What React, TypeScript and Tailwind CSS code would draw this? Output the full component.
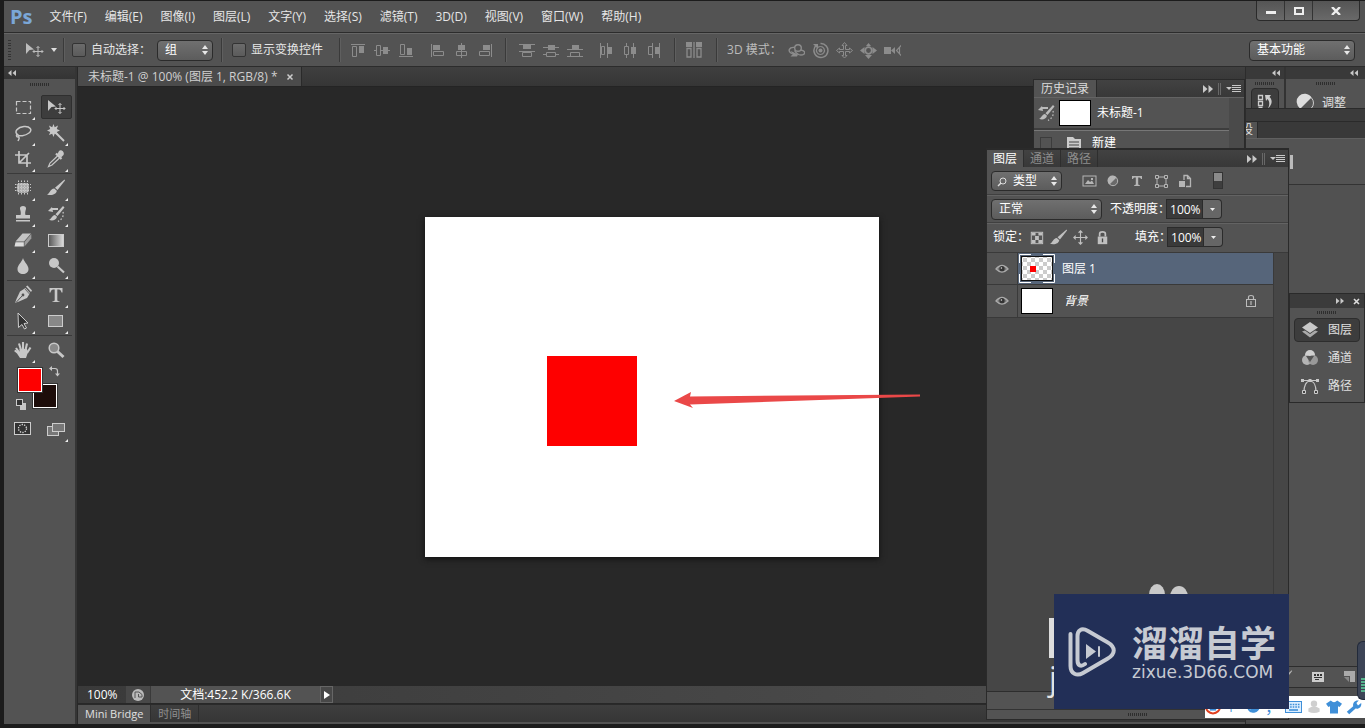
import type { ReactNode } from 'react';

const MENUS = [
  '文件(F)', '编辑(E)', '图像(I)', '图层(L)', '文字(Y)', '选择(S)',
  '滤镜(T)', '3D(D)', '视图(V)', '窗口(W)', '帮助(H)',
];

function Icon({ children, size = 'size-5', box = '0 0 20 20' }: { children: ReactNode; size?: string; box?: string }) {
  return (
    <svg className={`${size} shrink-0`} viewBox={box} fill="currentColor">
      {children}
    </svg>
  );
}

// stroked outline, no fill
function Line({ d, w = 1, dash }: { d: string; w?: number; dash?: string }) {
  return <path d={d} fill="none" stroke="currentColor" strokeWidth={w} strokeDasharray={dash} />;
}

const brush = (
  <>
    <path d="M18.5 1.5 L19 2.5 L11.5 12 L9 9.8 Z" />
    <path d="M8.3 10.5 L10.8 12.8 C10.5 16 6 18 1 16.5 C4 15.5 4 11 8.3 10.5Z" />
  </>
);

const historyBrush = (
  <>
    <path d="M17 2 L18.5 3.5 L11.5 12 L9.5 10.3Z" />
    <path d="M9 11 L11 12.8 C10 16.5 6 17 3 15.8 C5.5 15 6 11.5 9 11Z" />
    <path d="M2 7 L6 3 L7 8Z" />
    <Line d="M5 5 H12" w={2} />
    <Line d="M17 8 C18 12 16 15.5 12 17.5" w={1.3} dash="1.5 2" />
  </>
);

const lock = (
  <>
    <rect x="5" y="9" width="10" height="8" />
    <Line d="M7 9 V6 Q7 4 10 4 Q13 4 13 6 V9" w={1.8} />
    <path d="M9.3 11 H10.7 V15 H9.3Z" fill="#444" />
  </>
);

const moveCross = <Line d="M10 3 V17 M3 10 H17 M8 5 L10 3 L12 5 M8 15 L10 17 L12 15 M5 8 L3 10 L5 12 M15 8 L17 10 L15 12" w={1.2} />;

const TOOLS: { name: string; icon: ReactNode; plain?: boolean }[][] = [
  [
    { name: '选框', icon: <Line d="M3.5 4.5 H17.5 V16.5 H3.5Z" w={1.2} dash="4 2" /> },
    {
      name: '移动',
      icon: (
        <>
          <path d="M2 3 L10 9.5 L5.5 10 L2 14Z" />
          <Line d="M14 6.5 V16.5 M9 11.5 H19 M12.5 8 L14 6.5 L15.5 8 M12.5 15 L14 16.5 L15.5 15 M10.5 10 L9 11.5 L10.5 13 M17.5 10 L19 11.5 L17.5 13" />
        </>
      ),
      plain: true,
    },
    {
      name: '套索',
      icon: (
        <>
          <Line d="M5 12 C0 9 5 4 11 3.5 C17 3 20 7 16 10 C12 13 6 13.5 5 12 C3 11 3 14 5 14 C7 14 6 16 5 18" w={1.5} />
        </>
      ),
    },
    {
      name: '魔棒',
      icon: (
        <>
          <path d="M7.5 1 L8.7 4.2 L12 2.5 L10.8 6 L14 7.5 L10.8 9 L12 12 L8.7 10.7 L7.5 14 L6.2 10.7 L3 12 L4.2 9 L1 7.5 L4.2 6 L3 2.5 L6.2 4.2Z" />
          <Line d="M10 10 L18 18" w={2} />
        </>
      ),
    },
    { name: '裁剪', icon: <Line d="M6 2 V14 H18 M2 6 H14 V18 M6 14 L16 4" w={1.7} /> },
    {
      name: '吸管',
      icon: (
        <>
          <path d="M13 2 C15 0 19 3 17.5 6 L15 8.5 L11.5 5Z" />
          <Line d="M10 4.5 L15.5 10" w={2.2} />
          <Line d="M11.5 7 L4 14 L2.5 17.5 L6 16 L13.5 9" w={1.2} />
        </>
      ),
    },
  ],
  [
    {
      name: '修补',
      icon: (
        <>
          <rect x="4" y="5" width="12" height="10" rx="3" fill="#a9a9a9" />
          <Line d="M5.5 2.5 V17.5 M8.5 2.5 V17.5 M11.5 2.5 V17.5 M14.5 2.5 V17.5 M2 6.5 H18 M2 9.5 H18 M2 12.5 H18" dash="1.5 1" />
        </>
      ),
    },
    { name: '画笔', icon: brush },
    {
      name: '图章',
      icon: (
        <>
          <path d="M7 5 C6 1 14 1 13 5 C12 8 12 10 12.5 11 H17 V14.5 H3 V11 H7.5 C8 10 8 8 7 5Z" />
          <rect x="3" y="16" width="14" height="1.5" />
        </>
      ),
    },
    { name: '历史画笔', icon: historyBrush },
    {
      name: '橡皮',
      icon: (
        <>
          <path d="M9.5 3.5 H18 L11 11.5 H2.5Z" fill="#c4c4c4" />
          <path d="M18.3 4 V8.5 L11.5 16.5 V12Z" fill="#9c9c9c" />
          <path d="M2.5 12.3 H10.8 V16.5 H1.5Z" fill="#dcdcdc" />
        </>
      ),
    },
    {
      name: '渐变',
      icon: (
        <>
          <linearGradient id="ramp">
            <stop offset="0" stopColor="#555" />
            <stop offset="1" stopColor="#ddd" />
          </linearGradient>
          <rect x="2.5" y="4.5" width="15" height="12" fill="url(#ramp)" stroke="#ccc" />
        </>
      ),
    },
    { name: '模糊', icon: <path d="M10 2 C11 6 15.5 9 15.5 13 C15.5 16.5 13 18 10 18 C7 18 4.5 16.5 4.5 13 C4.5 9 9 6 10 2Z" /> },
    {
      name: '减淡',
      icon: (
        <>
          <circle cx="8" cy="7" r="5" />
          <Line d="M11.5 10.5 L18 16.5" w={2.2} />
        </>
      ),
    },
  ],
  [
    {
      name: '钢笔',
      icon: (
        <>
          <path d="M12.5 3 L17 8 L14 13 L6 16.5 L2 18 L3.5 14 L7 6.5Z" />
          <path d="M13 1.5 L14.5 0.5 L19 5.5 L18 7Z" />
          <path d="M12 4 L16.5 9" stroke="#535353" strokeWidth="0.8" />
          <path d="M3 17.5 L9.5 10.5" stroke="#535353" />
          <circle cx="10" cy="10" r="1.4" fill="#535353" />
        </>
      ),
    },
    {
      name: '文字',
      icon: <path d="M3.5 3 H16.5 V7.5 H15.5 C15 5 14 4.5 11.3 4.5 V15 C11.3 16 12 16.2 13.5 16.3 V17 H6.5 V16.3 C8 16.2 8.7 16 8.7 15 V4.5 C6 4.5 5 5 4.5 7.5 H3.5Z" />,
    },
    { name: '路径选择', icon: <path d="M5 2 L15 12 L11 12.5 L13.5 17 L11.5 18 L9 13.5 L5.5 16.5Z" fill="#333" stroke="#ccc" /> },
    { name: '矩形', icon: <rect x="2.5" y="4.5" width="14" height="11" fill="#888" stroke="#ccc" /> },
  ],
  [
    {
      name: '抓手',
      icon: (
        <>
          <Line d="M3 8 L6.5 13 M6 3.5 L8 10 M10 2 V10 M14 3.5 L12.5 10 M17.5 7.5 L14 13" w={2.1} />
          <path d="M6.5 9 H14 L15 12 L13 18 H7 L4 13.5 L1 11 L2.5 9.8 L6.5 12Z" />
        </>
      ),
    },
    {
      name: '缩放',
      icon: (
        <>
          <circle cx="8" cy="8" r="4.8" fill="#8a8a8a" stroke="currentColor" strokeWidth="1.5" />
          <Line d="M11.5 11.5 L17.5 17" w={3} />
        </>
      ),
      plain: true,
    },
  ],
];

// outline shape and solid shape, drawn next to one guide line each
const ALIGN_GROUPS = [
  [
    ['顶对齐', 'M1 2.5 H15 M2.5 4.5 H6.5 V14.5 H2.5Z', 'M9 4 H14 V11 H9Z'],
    ['垂直居中', 'M0 8.5 H2 M7 8.5 H16 M2.5 3.5 H6.5 V13.5 H2.5Z', 'M9 5 H14 V12 H9Z'],
    ['底对齐', 'M1 14.5 H15 M2.5 2.5 H6.5 V12.5 H2.5Z', 'M9 6 H14 V13 H9Z'],
  ],
  [
    ['左对齐', 'M2.5 2 V15 M4.5 9.5 H14.5 V13.5 H4.5Z', 'M4 3 H11 V8 H4Z'],
    ['水平居中', 'M8.5 1 V3 M8.5 8 V16 M3.5 9.5 H13.5 V13.5 H3.5Z', 'M5 3 H12 V8 H5Z'],
    ['右对齐', 'M14.5 2 V15 M2.5 9.5 H12.5 V13.5 H2.5Z', 'M6 3 H13 V8 H6Z'],
  ],
];

const SPREAD_GROUPS = [
  [
    ['按顶分布', 'M0 2.5 H16 M0 9.5 H16 M3.5 10.5 H12.5 V14.5 H3.5Z', 'M4 3 H12 V7 H4Z'],
    ['垂直分布', 'M0 5.5 H16 M0 12.5 H3 M13 12.5 H16 M3.5 10.5 H12.5 V14.5 H3.5Z', 'M5 3 H12 V8 H5Z'],
    ['按底分布', 'M0 7.5 H16 M0 14.5 H16 M3.5 10.5 H12.5 V14.5 H3.5Z', 'M5 3 H12 V7 H5Z'],
  ],
  [
    ['按左分布', 'M2.5 1 V16 M9.5 1 V16 M3.5 4.5 H6.5 V12.5 H3.5Z', 'M10 5 H14 V12 H10Z'],
    ['水平分布', 'M4.5 1 V4 M4.5 13 V16 M11.5 1 V16 M2.5 4.5 H6.5 V12.5 H2.5Z', 'M9 5 H14 V12 H9Z'],
    ['按右分布', 'M6.5 1 V16 M13.5 1 V16 M2.5 4.5 H6.5 V12.5 H2.5Z', 'M9 5 H13 V12 H9Z'],
  ],
];

const MODES_3D = [
  <g key="a">
    <circle cx="10" cy="6" r="3.3" fill="none" stroke="currentColor" strokeWidth="1.4" />
    <Line d="M7 5.5 C1 4.5 -1 9.5 4 11.5 M12.5 8 C18 8.5 18 13 13 13 C10 13 8 11 6.5 8.5" w={1.4} />
    <path d="M3 9 L10 12.5 L9 14.5 L2.5 14.5 L4.5 12.5Z" />
  </g>,
  <g key="b">
    <Line d="M4 3.5 A7 7 0 1 0 8.5 1.5" w={1.5} />
    <Line d="M8.5 4.5 A4 4 0 1 1 8.4 4.5" w={1.2} />
    <circle cx="8.5" cy="8.5" r="2" />
    <path d="M1 2 H6 V7Z" />
  </g>,
  <Line key="c" d="M8.5 0.5 L11 3.5 H9.5 V7.5 H13.5 V6 L16.5 8.5 L13.5 11 V9.5 H9.5 V13.5 H11 L8.5 16 L6 13.5 H7.5 V9.5 H3.5 V11 L0.5 8.5 L3.5 6 V7.5 H7.5 V3.5 H6Z" />,
  <g key="d">
    <circle cx="8.5" cy="8.5" r="3.3" fill="none" stroke="currentColor" strokeWidth="1.8" />
    <path d="M8.5 1 L11 4 H6Z M8.5 17 L12 13 H5Z M0 8.5 L4.5 5 V12Z M17 8.5 L12.5 5 V12Z" />
  </g>,
  <g key="e">
    <path d="M0 5 H7 V12 H0Z M7 8.5 L11 5 V12Z" />
    <Line d="M17.5 3 L12.5 8.5 L17.5 14 M15.5 5 V12" w={1.2} />
  </g>,
];

function Spin() {
  return (
    <svg className="pointer-events-none absolute right-1 top-1/2 h-3 w-2 -translate-y-1/2" viewBox="0 0 8 12" fill="#e8e8e8">
      <path d="M4 1 L7 5 H1Z M4 11 L1 7 H7Z" />
    </svg>
  );
}

function Dropdown({ label, value, className, indent = 'pl-[7px]' }: { label: string; value: string; className: string; indent?: string }) {
  return (
    <div className={`relative ${className}`}>
      <select
        aria-label={label}
        className={`h-full w-full appearance-none rounded-sm border border-[#2b2b2b] bg-gradient-to-b from-[#707070] to-[#5c5c5c] text-white ${indent}`}
      >
        <option>{value}</option>
      </select>
      <Spin />
    </div>
  );
}

function Check({ id, label }: { id: string; label: string }) {
  return (
    <label htmlFor={id} className="flex items-center gap-[5px]">
      <input
        id={id}
        type="checkbox"
        className="size-3.5 appearance-none rounded-xs border border-[#333] bg-gradient-to-b from-[#6b6b6b] to-[#5b5b5b]"
      />
      {label}
    </label>
  );
}

function Divider() {
  return <div className="h-6 w-0.5 border-l border-[#3a3a3a] bg-[#5f5f5f]" />;
}

function Grip() {
  return (
    <svg className="h-1 w-5" viewBox="0 0 20 4">
      <path d="M0.5 0 V3 M2.5 0 V3 M4.5 0 V3 M6.5 0 V3 M8.5 0 V3 M10.5 0 V3 M12.5 0 V3 M14.5 0 V3 M16.5 0 V3 M18.5 0 V3" stroke="#2e2e2e" />
    </svg>
  );
}

function Arrows({ left }: { left?: boolean }) {
  return (
    <svg className="h-1.5 w-2" viewBox="0 0 8 6" fill="#c8c8c8">
      <path d={left ? 'M3.5 0 V6 L0 3Z M8 0 V6 L4.5 3Z' : 'M0 0 L3.5 3 L0 6Z M4.5 0 L8 3 L4.5 6Z'} />
    </svg>
  );
}

function PanelControls() {
  return (
    <div className="ml-auto flex items-center gap-[5px]">
      <button aria-label="折叠">
        <svg className="h-2 w-2.5" viewBox="0 0 10 8" fill="#c8c8c8">
          <path d="M0 0 L4.5 4 L0 8Z M5.5 0 L10 4 L5.5 8Z" />
        </svg>
      </button>
      <span className="h-3 w-[3px] border-x border-[#686868]" />
      <button aria-label="面板菜单">
        <svg className="h-2.5 w-4" viewBox="0 0 16 10" fill="#c8c8c8">
          <path d="M0 3 H6 L3 6Z" />
          <path d="M6 1 H15 V2 H6Z M6 3 H15 V4 H6Z M6 5 H15 V6 H6Z M6 7 H15 V8 H6Z" />
        </svg>
      </button>
    </div>
  );
}

function TitleBar() {
  return (
    <header className="flex h-8 items-center border-b border-[#2c2c2c] pl-1.5 text-[#e6e6e6]">
      <span className="mr-[17px] font-['Open_Sans'] text-xl leading-6 font-bold text-[#7ba7d7]">Ps</span>
      <nav className="flex gap-[18px]">
        {MENUS.map((m) => (
          <button key={m}>{m}</button>
        ))}
      </nav>
      <div className="ml-auto mr-[5px] flex h-5 self-start overflow-hidden rounded-b border border-t-0 border-[#2a2a2a] bg-gradient-to-b from-[#555] to-[#696969] text-white">
        <button aria-label="最小化" className="grid w-7 place-items-center border-r border-[#333]">
          <span className="mt-1 h-[3px] w-2.5 bg-[#eee]" />
        </button>
        <button aria-label="最大化" className="grid w-7 place-items-center border-r border-[#333]">
          <span className="h-2 w-2.5 border-2 border-[#eee]" />
        </button>
        <button aria-label="关闭" className="grid w-[46px] place-items-center">
          <svg className="h-2 w-2.5" viewBox="0 0 10 8">
            <path d="M1 0 L9 8 M9 0 L1 8" stroke="#eee" strokeWidth="2.4" />
          </svg>
        </button>
      </div>
    </header>
  );
}

function AlignButtons({ groups }: { groups: string[][][] }) {
  return (
    <div className="flex gap-[15px] text-[#8c8c8c]">
      {groups.map((g, i) => (
        <div key={i} className="flex gap-2">
          {g.map(([name, outline, solid]) => (
            <button key={name} aria-label={name}>
              <Icon size="size-4" box="0 0 16 16">
                <Line d={outline} />
                <path d={solid} />
              </Icon>
            </button>
          ))}
        </div>
      ))}
    </div>
  );
}

function OptionsBar() {
  return (
    <div className="flex h-[34px] items-center border-b border-t border-b-[#2c2c2c] border-t-[#666] pl-1 pr-2.5">
      <div className="grid h-5 content-between pr-[9px]">
        {[0, 1, 2, 3, 4, 5, 6, 7].map((n) => (
          <span key={n} className="h-px w-[3px] bg-[#333]" />
        ))}
      </div>
      <button aria-label="移动工具" className="flex items-center gap-[7px] pr-1.5 pl-1 text-[#bdbdbd]">
        <Icon>{TOOLS[0][1].icon}</Icon>
        <svg className="h-1 w-1.5" viewBox="0 0 6 4" fill="#ddd">
          <path d="M0 0 H6 L3 4Z" />
        </svg>
      </button>
      <Divider />
      <div className="flex items-center pl-[7px] pr-2">
        <Check id="auto-select" label="自动选择：" />
        <Dropdown label="选择对象" value="组" className="ml-1.5 h-[21px] w-14" />
      </div>
      <Divider />
      <div className="pl-[9px] pr-4">
        <Check id="show-transform" label="显示变换控件" />
      </div>
      <Divider />
      <div className="pl-[9px] pr-3">
        <AlignButtons groups={ALIGN_GROUPS} />
      </div>
      <Divider />
      <div className="px-3">
        <AlignButtons groups={SPREAD_GROUPS} />
      </div>
      <Divider />
      <button aria-label="自动对齐" className="pl-2.5 pr-[14px] text-[#8c8c8c]">
        <Icon size="size-4" box="0 0 16 16">
          <path d="M0 0 H6 V5 H0Z M10 0 H16 V5 H10Z" />
          <Line d="M8 0 V16 M1 6.5 H5 V15 H1Z M11 6.5 H15 V15 H11Z" w={1.3} />
        </Icon>
      </button>
      <Divider />
      <span className="pl-[9px] pr-1.5 text-[#bbb]">3D 模式：</span>
      <div className="flex gap-[7px] text-[#8c8c8c]">
        {MODES_3D.map((icon, i) => (
          <button key={i} aria-label={`3D 模式 ${i + 1}`}>
            <Icon size="size-[17px]" box="0 0 17 17">{icon}</Icon>
          </button>
        ))}
      </div>
      <Dropdown label="工作区" value="基本功能" className="ml-auto h-[21px] w-[106px]" />
    </div>
  );
}

function Toolbox() {
  return (
    <aside className="flex w-[73px] shrink-0 flex-col border-r-2 border-[#353535] bg-[#535353] text-[#c8c8c8]">
      <div className="flex h-3 items-center bg-gradient-to-b from-[#3c3c3c] to-[#343434] pl-1">
        <Arrows left />
      </div>
      <div className="flex h-[15px] justify-center pt-1">
        <Grip />
      </div>
      {TOOLS.map((group, i) => (
        <div key={i}>
          {i > 0 && <div className="mx-[3px] my-px h-px bg-[#3a3a3a]" />}
          <div className="grid grid-cols-2 pl-0.5 pr-[3px]">
            {group.map((t) => (
              <button key={t.name} aria-label={t.name} className="relative grid h-[26px] place-items-center">
                {t.name === '移动' && <span className="absolute inset-y-px left-0.5 right-0 rounded-xs border border-[#2f2f2f] bg-[#3d3d3d]" />}
                <span className="relative">
                  <Icon>{t.icon}</Icon>
                </span>
                {!t.plain && (
                  <svg className="absolute bottom-0 right-1 size-[3px]" viewBox="0 0 3 3" fill="#eee">
                    <path d="M3 0 V3 H0Z" />
                  </svg>
                )}
              </button>
            ))}
          </div>
        </div>
      ))}
      <div className="relative h-[53px]">
        <button aria-label="背景色" className="absolute left-[29px] top-[21px] size-6 border border-white bg-[#1d0d0a] outline outline-[#333]" />
        <button aria-label="前景色" className="absolute left-[14px] top-[5px] size-6 border border-white bg-[#fe0000] outline outline-[#333]" />
        <button aria-label="切换颜色" className="absolute left-[45px] top-0.5">
          <Icon size="size-3" box="0 0 12 12">
            <Line d="M2 3.5 H6 Q8.5 3.5 8.5 6 V10" w={1.2} />
            <path d="M3 1 V6 L0 3.5Z M6 8.5 H11 L8.5 11.5Z" />
          </Icon>
        </button>
        <button aria-label="默认颜色" className="absolute left-3 top-9">
          <Icon size="size-3" box="0 0 12 12">
            <path d="M4 4 H10 V11 H4Z" />
            <rect x="0.5" y="0.5" width="6" height="6" fill="#333" stroke="#ccc" />
          </Icon>
        </button>
      </div>
      <div className="grid grid-cols-2 pl-0.5 pr-[3px]">
        <button aria-label="快速蒙版" className="grid h-[26px] place-items-center">
          <Icon>
            <rect x="1.5" y="3.5" width="16" height="12" fill="#333" stroke="#ccc" />
            <circle cx="9.5" cy="9.5" r="4" fill="none" stroke="#ddd" strokeWidth="1.3" strokeDasharray="1.3 1.2" />
          </Icon>
        </button>
        <button aria-label="屏幕模式" className="relative grid h-[26px] place-items-center">
          <Icon>
            <rect x="1.5" y="7.5" width="11" height="9" fill="#777" stroke="#ccc" />
            <rect x="6.5" y="4.5" width="12" height="8" fill="#777" stroke="#ccc" />
          </Icon>
          <svg className="absolute bottom-0 right-1 size-[3px]" viewBox="0 0 3 3" fill="#eee">
            <path d="M3 0 V3 H0Z" />
          </svg>
        </button>
      </div>
    </aside>
  );
}

function Workspace() {
  return (
    <main className="flex min-w-0 flex-1 flex-col bg-[#282828] pl-px">
      <div className="flex h-5 shrink-0 border-b border-[#242424] bg-gradient-to-b from-[#3f3f3f] to-[#363636]">
        <div className="flex items-center gap-2 border-r border-[#2a2a2a] bg-[#4b4b4b] pl-2.5 pr-[7px] text-[#d0d0d0]">
          未标题-1 @ 100% (图层 1, RGB/8) *
          <button aria-label="关闭文档">
            <svg className="size-2" viewBox="0 0 8 8">
              <path d="M1.5 1.5 L6.5 6.5 M6.5 1.5 L1.5 6.5" stroke="#ccc" strokeWidth="1.5" />
            </svg>
          </button>
        </div>
      </div>
      <div className="flex flex-1 items-center justify-center pr-5">
        <div className="relative h-[340px] w-[454px] shrink-0 bg-white shadow-[0_2px_6px_#111]">
          <div className="absolute left-[122px] top-[139px] size-[90px] bg-[#fe0000]" />
          <svg className="absolute left-[248px] top-[172px] h-6 w-[250px]" viewBox="0 0 250 24">
            <path d="M1 12 L18 3 L17 7.5 L247 5.5 L247 7.5 L17 15.5 L20 19Z" fill="#ea4848" />
          </svg>
        </div>
      </div>
      <div className="flex h-[17px] shrink-0 items-center bg-gradient-to-r from-[#3a3a3a] to-[#505050] text-white">
        <span className="w-12 pl-[9px]">100%</span>
        <button aria-label="导出" className="flex h-full w-6 items-center justify-center bg-[#484848]">
          <Icon size="size-3.5" box="0 0 14 14">
            <circle cx="7" cy="7" r="6" fill="#bbb" />
            <path d="M4 10 V4 H8 L11 6.5 V9 H7.5 V6" fill="none" stroke="#555" />
          </Icon>
        </button>
        <span className="flex h-full w-[170px] items-center justify-center border-l border-[#3a3a3a] bg-[#535353]">文档:452.2 K/366.6K</span>
        <button aria-label="状态选项" className="grid h-full w-[13px] place-items-center border border-[#666] bg-[#484848]">
          <svg className="h-2 w-1.5" viewBox="0 0 6 8" fill="#fff">
            <path d="M0 0 L6 4 L0 8Z" />
          </svg>
        </button>
      </div>
      <div className="mt-px flex h-[18px] shrink-0 border-t border-[#2a2a2a] bg-gradient-to-b from-[#3e3e3e] to-[#363636] text-[11px]">
        <button className="bg-[#535353] px-[7px] text-[#e0e0e0]">Mini Bridge</button>
        <button className="border-x border-[#2e2e2e] px-[7px] text-[#909090]">时间轴</button>
      </div>
      <div className="h-0.5 shrink-0 bg-[#535353]" />
    </main>
  );
}

function Docks() {
  return (
    <aside className="flex w-[120px] shrink-0 flex-col border-l border-[#2c2c2c]">
      <div className="flex h-[41px] overflow-hidden">
        <div className="w-10 border-r-2 border-[#333]">
          <div className="flex h-3 items-center justify-end bg-[#393939] pr-1">
            <Arrows left />
          </div>
          <div className="flex flex-col items-center pt-[3px]">
            <Grip />
            <button aria-label="历史记录" className="mt-0.5 grid h-7 w-7 place-items-center rounded border border-[#2b2b2b] bg-[#3d3d3d] text-[#ccc]">
              <Icon>
                <Line d="M3.5 3.5 H7.5 V7.5 H3.5Z M3.5 9.5 H7.5 V13.5 H3.5Z M3.5 15.5 H7.5" w={1.3} />
                <path d="M10 3 H16 L14.5 5 C18 8 17 13 13 16.5 C15 12 14.5 9 12.5 7 L11 9Z" />
              </Icon>
            </button>
          </div>
        </div>
        <div className="flex-1">
          <div className="flex h-3 items-center justify-end bg-[#393939] pr-[7px]">
            <Arrows left />
          </div>
          <div className="flex justify-center pt-[3px]">
            <Grip />
          </div>
          <button className="flex h-7 items-center gap-2 pl-2 pt-1.5 text-[#e0e0e0]">
            <Icon>
              <circle cx="12" cy="10" r="7.5" fill="#555" stroke="#ccc" />
              <path d="M17.5 4.5 A8 8 0 1 0 6.5 15.5Z" fill="#ddd" />
            </Icon>
            调整
          </button>
        </div>
      </div>
      <div className="h-[13px] shrink-0 border-t border-[#2a2a2a] bg-[#3b3b3b]" />
      <div className="flex h-[18px] shrink-0 border-y border-b-[#606060] border-t-[#2a2a2a] bg-[#393939]">
        <div className="flex w-3 justify-end overflow-hidden border-r border-[#2a2a2a] bg-[#535353] pr-1 text-[#ddd]">
          <span>设</span>
        </div>
      </div>
      <div className="h-[46px] shrink-0 border-b border-[#333] pl-11 pt-4">
        <div className="h-3.5 w-[3px] bg-[#bbb]" />
      </div>
      <div className="flex-1 bg-[#515151]" />
      <div className="flex h-[22px] shrink-0 items-center justify-end gap-[18px] border-y border-[#2d2d2d] pr-2 text-[#b5b5b5]">
        <Icon size="size-4">{brush}</Icon>
        <Icon size="size-3.5" box="0 0 14 14">
          <path d="M1 2 H13 V12 H1Z" fill="#ccc" />
          <path d="M3 4 H5 V6 H3Z M6 4 H8 V6 H6Z M9 4 H11 V6 H9Z M3 7 H11 V8 H3Z M4 9 H8 V10 H4Z" fill="#333" />
        </Icon>
        <Icon size="size-3.5" box="0 0 14 14">
          <path d="M1 1 H12 V12 H7 V6 H1Z" fill="#aaa" />
          <path d="M1 7 H6 V12Z" fill="#888" />
        </Icon>
      </div>
      <div className="h-9 shrink-0 bg-[#4c4c4c]" />
    </aside>
  );
}

function HistoryPanel() {
  return (
    <section className="absolute right-[120px] top-[78px] w-[212px] border border-[#2a2a2a] bg-[#535353] text-white">
      <div className="flex h-[18px] border-b border-[#636363] bg-gradient-to-b from-[#424242] to-[#383838] pr-0.5">
        <button className="border-r border-[#2a2a2a] bg-[#535353] px-[7px] text-[#ddd]">历史记录</button>
        <PanelControls />
      </div>
      <div className="flex border-r-[15px] border-[#4a4a4a]">
        <ul className="flex-1">
          <li className="flex h-8 items-center border-b-2 border-[#3d3d3d] pl-0.5">
            <span className="text-[#bbb]">
              <Icon>{historyBrush}</Icon>
            </span>
            <span className="ml-[3px] h-[26px] w-8 border border-black bg-white" />
            <span className="ml-1.5">未标题-1</span>
          </li>
          <li className="flex h-6 items-center border-t border-[#777] pl-1.5">
            <span className="size-3 border border-[#3c3c3c]" />
            <span className="ml-3 text-[#ccc]">
              <Icon box="0 0 20 18">
                <path d="M3 3 H9 L11 5 H17 V17 H3Z" />
                <path d="M5 8 H15 M5 11 H15 M5 14 H15" stroke="#444" />
              </Icon>
            </span>
            <span className="ml-2">新建</span>
          </li>
        </ul>
      </div>
    </section>
  );
}

function Eye() {
  return (
    <Icon size="size-3.5" box="0 0 14 14">
      <path d="M1 7 Q7 0 13 7 Q7 13 1 7Z" fill="#777" stroke="#aaa" strokeWidth="1.3" />
      <circle cx="7" cy="6.7" r="2.6" fill="#333" />
      <circle cx="6.4" cy="6" r="0.8" fill="#ddd" />
    </Icon>
  );
}

function Percent({ id, label }: { id: string; label: string }) {
  return (
    <div className="flex items-center">
      <label htmlFor={id} className="-mr-1">{label}</label>
      <input id={id} defaultValue="100%" className="h-5 w-[37px] border border-[#2b2b2b] bg-[#3a3a3a] pl-[3px]" />
      <button aria-label="调节" className="grid h-5 w-[19px] place-items-center rounded-r-sm border border-l-0 border-[#2b2b2b] bg-[#666]">
        <svg className="h-[3px] w-[5px]" viewBox="0 0 5 3" fill="#eee">
          <path d="M0 0 H5 L2.5 3Z" />
        </svg>
      </button>
    </div>
  );
}

function LayersPanel() {
  return (
    <section className="absolute bottom-1 right-[76px] top-[147px] flex w-[303px] flex-col border border-t-2 border-[#2a2a2a] bg-[#535353] text-white">
      <div className="flex h-[17px] shrink-0 bg-gradient-to-b from-[#424242] to-[#383838] pr-0.5 text-[#8d8d8d]">
        <button className="border-r border-[#2e2e2e] bg-[#535353] px-[6px] text-white">图层</button>
        <button className="border-r border-[#2e2e2e] px-[6px]">通道</button>
        <button className="border-r border-[#2e2e2e] px-[6px]">路径</button>
        <PanelControls />
      </div>
      <div className="flex h-7 shrink-0 items-center border-b border-[#404040] pl-1 text-[#b5b5b5]">
        <div className="relative">
          <Dropdown label="滤镜类型" value="类型" className="h-5 w-[71px]" indent="pl-[21px]" />
          <svg className="pointer-events-none absolute left-1.5 top-1.5 size-2.5" viewBox="0 0 10 10" fill="none" stroke="#ddd">
            <circle cx="6" cy="4" r="3" />
            <path d="M4 6 L1 9" strokeWidth="1.5" />
          </svg>
        </div>
        <div className="ml-[17px] flex gap-1">
          <Icon>
            <rect x="4" y="5" width="13" height="10" fill="none" stroke="currentColor" />
            <path d="M6 13 L9 9 L11 11 L13 9.5 L15 13Z M12 7 H14 V9 H12Z" />
          </Icon>
          <Icon>
            <circle cx="10" cy="10" r="4.7" fill="#6a6a6a" stroke="currentColor" />
            <path d="M13.5 6.5 A5 5 0 1 0 6.5 13.5Z" />
          </Icon>
          <Icon>
            <path d="M5 5 H15 V8 H14 C13.5 6.5 13 6.5 11.2 6.5 V13.5 L13 14.5 V15 H7 V14.5 L8.8 13.5 V6.5 C7 6.5 6.5 6.5 6 8 H5Z" />
          </Icon>
          <Icon>
            <Line d="M6 6 V15 M15 6 V15 M6 6 H15 M6 15 H15" />
            <path d="M4.5 4.5 H7.5 V7.5 H4.5Z M13.5 4.5 H16.5 V7.5 H13.5Z M4.5 13.5 H7.5 V16.5 H4.5Z M13.5 13.5 H16.5 V16.5 H13.5Z" fill="#535353" stroke="currentColor" />
          </Icon>
          <Icon>
            <Line d="M9 9 V4.5 H12.5 L15.5 7.5 V15.5 H11 M12.5 4.5 V7.5 H15.5" w={1.3} />
            <path d="M4 10 H10 V16 H4Z" />
          </Icon>
        </div>
        <button aria-label="图层过滤开关" className="ml-[18px] flex h-[17px] w-2.5 items-start border border-[#333] bg-[#3e3e3e]">
          <span className="h-2 w-full bg-[#8a8a8a]" />
        </button>
      </div>
      <div className="flex h-7 shrink-0 items-center border-b border-t border-b-[#404040] border-t-[#636363] pl-1">
        <Dropdown label="混合模式" value="正常" className="mr-2 h-[21px] w-[111px]" />
        <Percent id="opacity" label="不透明度：" />
      </div>
      <div className="flex h-[29px] shrink-0 items-center border-t border-[#636363] pb-0.5 pl-1.5">
        <span>锁定：</span>
        <div className="mr-[23px] -ml-0.5 flex gap-[3px] text-[#c0c0c0]">
          <Icon size="size-[19px]">
            <rect x="4.5" y="4.5" width="12" height="12" fill="#555" stroke="currentColor" />
            <path d="M5 5 H9 V8 H5Z M12 5 H16 V8 H12Z M8.5 8.5 H12.5 V12.5 H8.5Z M5 12.5 H9 V16 H5Z M12 12.5 H16 V16 H12Z" />
          </Icon>
          <Icon size="size-[19px]">{brush}</Icon>
          <Icon size="size-[19px]">{moveCross}</Icon>
          <Icon size="size-[19px]">{lock}</Icon>
        </div>
        <Percent id="fill" label="填充：" />
      </div>
      <div className="flex flex-1 border-t border-[#3a3a3a]">
        <ul className="flex-1 bg-[#464646]">
          <li className="flex h-8 items-center border-b border-[#393939] bg-[#56657a]">
            <button aria-label="显示图层 1" className="grid h-full w-[31px] place-items-center border-r border-[#3a3a3a] bg-[#535353]">
              <Eye />
            </button>
            <svg className="ml-px h-[29px] w-9" viewBox="0 0 36 29">
              <defs>
                <pattern id="checker" width="8" height="8" patternUnits="userSpaceOnUse">
                  <path d="M0 0 H8 V8 H0Z" fill="#fff" />
                  <path d="M0 0 H4 V4 H0Z M4 4 H8 V8 H4Z" fill="#ccc" />
                </pattern>
              </defs>
              <rect x="2.5" y="2.5" width="31" height="24" fill="url(#checker)" stroke="#111" />
              <path d="M11 12 H17 V18 H11Z" fill="#fe0000" />
              <path d="M0.5 9 V0.5 H12 M24 0.5 H35.5 V9 M35.5 20 V28.5 H24 M12 28.5 H0.5 V20" fill="none" stroke="#fff" />
            </svg>
            <span className="ml-[7px]">图层 1</span>
          </li>
          <li className="flex h-[33px] items-center border-b border-[#393939] bg-[#535353]">
            <button aria-label="显示背景" className="grid h-full w-[31px] place-items-center border-r border-[#3a3a3a]">
              <Eye />
            </button>
            <span className="ml-[3px] h-[26px] w-8 border border-black bg-white" />
            <span className="ml-[11px] italic">背景</span>
            <span className="ml-auto mr-3 text-[#bbb]">
              <Icon>
                <rect x="5.5" y="8.5" width="9" height="7" fill="none" stroke="currentColor" />
                <Line d="M7.5 8.5 V6 Q7.5 4.5 10 4.5 Q12.5 4.5 12.5 6 V8.5" w={1.2} />
                <path d="M9.4 10 H10.6 V14 H9.4Z" />
              </Icon>
            </span>
          </li>
        </ul>
        <div className="w-[15px] border-l border-[#3a3a3a] bg-[#464646]" />
      </div>
      <div className="h-[18px] shrink-0 border-t border-[#2d2d2d]" />
      <div className="flex h-2.5 shrink-0 items-center justify-center border-t border-[#333]">
        <Grip />
      </div>
    </section>
  );
}

function CollapsedDock() {
  const rows = [
    {
      name: '图层',
      icon: (
        <>
          <path d="M10 2 L18 7.5 L10 13 L2 7.5Z" />
          <path d="M2 11.5 L5 10.5 L10 14 L15 10.5 L18 11.5 L10 17.5Z" fill="#aaa" />
        </>
      ),
    },
    {
      name: '通道',
      icon: (
        <>
          <circle cx="10" cy="7" r="5" fill="#d0d0d0" />
          <circle cx="7" cy="12" r="5" fill="#b4b4b4" />
          <circle cx="13" cy="12" r="5" fill="#999" />
          <path d="M6 8 H14 L10 14Z" fill="#555" />
        </>
      ),
    },
    {
      name: '路径',
      icon: (
        <>
          <Line d="M1 4.5 H19 M4 16 C4 10 6 5 10 5 C14 5 16 10 16 16" w={1.2} />
          <path d="M1 3 H4 V6 H1Z M8.5 3 H11.5 V6 H8.5Z M16 3 H19 V6 H16Z" />
          <path d="M2.5 14.5 H5.5 V17.5 H2.5Z M14.5 14.5 H17.5 V17.5 H14.5Z" fill="#444" stroke="#ccc" />
        </>
      ),
    },
  ];
  return (
    <section className="absolute right-0 top-[292px] w-[76px] border border-[#2a2a2a] bg-[#535353] text-[#e0e0e0]">
      <div className="flex h-3.5 items-center justify-end gap-[9px] bg-[#3b3b3b] pr-1">
        <Arrows />
        <svg className="size-[7px]" viewBox="0 0 7 7">
          <path d="M1 1 L6 6 M6 1 L1 6" stroke="#ddd" strokeWidth="1.6" />
        </svg>
      </div>
      <div className="flex h-2.5 justify-center pt-[3px]">
        <Grip />
      </div>
      <div className="grid gap-1 px-1 pb-1">
        {rows.map((r, i) => (
          <button
            key={r.name}
            className={`flex h-6 items-center gap-2 rounded border pl-[5px] ${i === 0 ? 'border-[#2d2d2d] bg-[#3d3d3d]' : 'border-transparent'}`}
          >
            <span className="text-[#c8c8c8]">
              <Icon>{r.icon}</Icon>
            </span>
            {r.name}
          </button>
        ))}
      </div>
    </section>
  );
}

function InputMethodBar() {
  return (
    <div className="absolute bottom-1.5 right-0 flex h-[22px] w-40 items-center gap-1 bg-white text-[#3f8fd8]">
      <Icon size="size-4">
        <circle cx="10" cy="9" r="9" fill="#fff" stroke="#e04020" strokeWidth="2.5" />
        <Line d="M6 13 H14" w={3} />
      </Icon>
      <span className="w-4">中</span>
      <Icon size="size-4">
        <path d="M14 2 A8 8 0 1 1 3 12 A8 8 0 0 0 14 2Z" />
      </Icon>
      <span className="w-4 text-base">，</span>
      <Icon size="h-4 w-[17px]" box="0 0 17 16">
        <rect x="0.5" y="2.5" width="16" height="11" fill="#dceeff" stroke="#3f8fd8" />
        <path d="M2.5 5.5 H15 M2.5 8 H15" stroke="#3f8fd8" strokeWidth="1.6" strokeDasharray="1.6 1" />
        <path d="M4 11 H13" stroke="#3f8fd8" strokeWidth="1.6" />
      </Icon>
      <Icon size="size-4">
        <circle cx="10" cy="6" r="4" fill="#cfcfcf" />
        <path d="M3 12 Q10 7 17 12 V16 Q10 19 3 16Z" fill="#cfcfcf" />
      </Icon>
      <Icon size="size-4">
        <path d="M6 2 Q10 6 14 2 L20 6 L17 10 L15 9 V18 H5 V9 L3 10 L0 6Z" />
      </Icon>
      <Icon size="size-4">
        <path d="M1 16 L9 9 C8 4 12 1 16 2 L13 5 L15 8 L19 5 C20 10 16 13 12 12 L4 19Z" />
      </Icon>
    </div>
  );
}

function Watermark() {
  return (
    <div className="absolute bottom-[15px] right-[76px] flex h-[115px] w-[235px] items-center bg-[#222f57] pl-3.5 text-[#c6cad2]">
      <svg className="mr-4 h-[50px] w-12 shrink-0" viewBox="0 0 48 50" fill="none" stroke="currentColor" strokeLinecap="round">
        <path d="M2.5 7 V39 C2.5 47 9 49.5 15 46 L39 32 C48 27 48 20 39 15 L20 4 C13 0 9.5 4 9.5 9 V33 C9.5 39 13 40 17 37" strokeWidth="4" />
        <path d="M18 17 L28 24.5 L18 32Z" fill="currentColor" stroke="none" />
        <path d="M31 20 V29" strokeWidth="2" />
      </svg>
      <div>
        <div className="text-4xl leading-10 font-bold">溜溜自学</div>
        <div className="font-['DejaVu_Sans'] text-[17px] leading-4">zixue.3D66.COM</div>
      </div>
    </div>
  );
}

export default function App() {
  return (
    <div className="relative flex h-screen min-h-[640px] flex-col overflow-hidden border-b-4 border-l-4 border-t border-[#1c1c1c] bg-[#535353] font-['Open_Sans','Noto_Sans_CJK_SC',sans-serif] text-xs leading-4 text-[#e6e6e6]">
      <TitleBar />
      <OptionsBar />
      <div className="flex min-h-0 flex-1">
        <Toolbox />
        <Workspace />
        <Docks />
      </div>
      <HistoryPanel />
      <LayersPanel />
      <CollapsedDock />
      <div className="absolute bottom-[26px] right-[308px] text-[32px] leading-10 text-[#e4e4e4]">j</div>
      <div className="absolute bottom-[66px] right-[311px] h-10 w-[5px] bg-[#ddd]" />
      <svg className="absolute bottom-[125px] right-[176px] h-4 w-10" viewBox="0 0 40 16" fill="#c9c9c9">
        <ellipse cx="8" cy="12" rx="8" ry="11" />
        <ellipse cx="30" cy="14" rx="9" ry="11" />
      </svg>
      <InputMethodBar />
      <Watermark />
      <div className="absolute bottom-6 right-0 h-[59px] w-2 rounded-l-md border border-r-0 border-[#222a3a] bg-[#3c4456] pl-[3px] pt-9">
        <svg className="h-4 w-1" viewBox="0 0 4 16">
          <path d="M0 1 H4 M0 4 H4 M0 7 H4 M0 10 H4 M0 13 H4" stroke="#5fd6a0" strokeWidth="1.5" />
        </svg>
      </div>
    </div>
  );
}
